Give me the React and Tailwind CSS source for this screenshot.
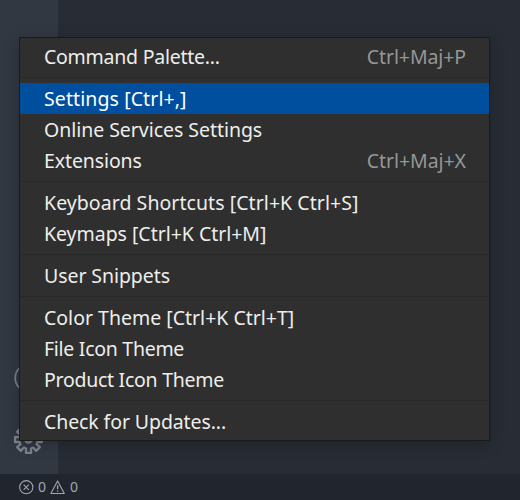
const groups = [
  [{ label: 'Command Palette...', keys: 'Ctrl+Maj+P', fit: 'tracking-[-0.25px]', keysFit: 'tracking-[-0.1px]' }],
  [
    { label: 'Settings [Ctrl+,]', active: true, fit: 'tracking-[0.1px]' },
    { label: 'Online Services Settings', fit: 'tracking-[-0.04px]' },
    { label: 'Extensions', keys: 'Ctrl+Maj+X', fit: 'tracking-[-0.1px]', keysFit: 'tracking-[-0.05px]' },
  ],
  [
    { label: 'Keyboard Shortcuts [Ctrl+K Ctrl+S]', fit: 'tracking-[0.06px]' },
    { label: 'Keymaps [Ctrl+K Ctrl+M]', fit: 'tracking-[-0.03px]' },
  ],
  [{ label: 'User Snippets', fit: 'tracking-[-0.07px]' }],
  [
    { label: 'Color Theme [Ctrl+K Ctrl+T]', fit: 'tracking-[0px]' },
    { label: 'File Icon Theme', fit: 'tracking-[-0.28px]' },
    { label: 'Product Icon Theme', fit: 'tracking-[-0.27px]' },
  ],
  [{ label: 'Check for Updates...', fit: 'tracking-[-0.1px]' }],
];

function MenuItem({ label, keys, active, fit, keysFit }) {
  return (
    <div className={`flex h-[31px] items-center justify-between pl-6 pr-[23px] ${active ? 'bg-[#004f9e] text-white' : 'text-[#eeeeec]'}`}>
      <span className={`whitespace-nowrap ${fit}`}>{label}</span>
      {keys && <span className={`whitespace-nowrap text-[#969696] ${keysFit}`}>{keys}</span>}
    </div>
  );
}

function Menu() {
  return (
    <div className="absolute left-[19px] top-[37px] w-[471px] border border-[#1b1b1b] bg-[#2f2f2f] py-[3px] text-[19.5px] leading-[31px] shadow-[0_3px_14px_rgba(0,0,0,0.25)]">
      {groups.map((items, i) => (
        <div key={i}>
          {i > 0 && <div className="my-[5px] h-px bg-[#282828]" />}
          {items.map((item) => (
            <MenuItem key={item.label} {...item} />
          ))}
        </div>
      ))}
    </div>
  );
}

function AccountIcon() {
  return (
    <svg className="h-8 w-8" viewBox="0 0 32 32" fill="none" stroke="#7a818e" strokeWidth="1.7">
      <circle cx="16" cy="16" r="13.8" />
    </svg>
  );
}

// Outline of an eight-toothed gear centred on the origin: [radius, degrees] per tooth.
const tooth = [[9.3, -15], [13.7, -11], [13.7, 11], [9.3, 15]];
const gearPoints = Array.from({ length: 8 }, (_, k) =>
  tooth.map(([r, deg]) => {
    const a = ((k * 45 + deg) * Math.PI) / 180;
    return `${(r * Math.cos(a)).toFixed(2)},${(r * Math.sin(a)).toFixed(2)}`;
  }).join(' ')
).join(' ');

function GearIcon() {
  return (
    <svg className="mr-px h-[31px] w-[31px]" viewBox="-15.5 -15.5 31 31" fill="none" stroke="#7d838e" strokeWidth="2.3" strokeLinejoin="round">
      <polygon points={gearPoints} />
      <circle r="3.2" />
    </svg>
  );
}

function StatusBar() {
  return (
    <div className="flex h-[26px] items-center bg-[#21252d] pl-[19px] text-[14px] leading-none text-[#a0a6b3]">
      <svg className="h-[15px] w-[15px]" viewBox="0 0 15 15" fill="none" stroke="currentColor" strokeWidth="1.1">
        <circle cx="7.25" cy="7.2" r="6.6" />
        <path d="M4.6 4.6l5.2 5.2M9.8 4.6l-5.2 5.2" />
      </svg>
      <span className="ml-1 w-[9px]">0</span>
      <svg className="ml-[3px] h-[15px] w-[15px]" viewBox="0 0 15 15" fill="none" stroke="currentColor" strokeWidth="1.1">
        <path d="M7.6 0.9L14.3 13.5H0.9z" strokeLinejoin="round" />
        <path d="M7.6 5.2v4M7.6 10.4v1.4" strokeWidth="1.3" />
      </svg>
      <span className="ml-[5px]">0</span>
    </div>
  );
}

export default function App() {
  return (
    <div className="relative flex h-[500px] w-[520px] flex-col overflow-hidden bg-[#282c34] font-['Noto_Sans',sans-serif]">
      <div className="flex min-h-0 flex-1">
        <div className="flex w-[58px] flex-col items-center justify-end gap-[30px] bg-[#323842] pb-[19px]">
          <AccountIcon />
          <GearIcon />
        </div>
        <div className="flex-1" />
      </div>
      <StatusBar />
      <Menu />
    </div>
  );
}
